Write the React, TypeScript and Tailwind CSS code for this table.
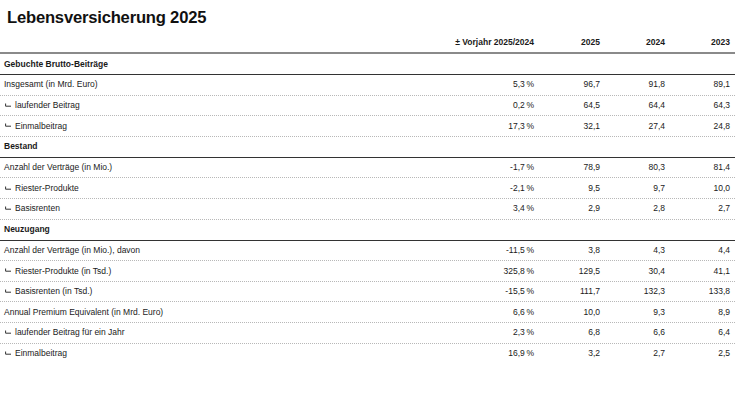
import React from "react";

type Row = { label: string; sub?: boolean; v: [string, string, string, string] };
type Section = { title: string; rows: Row[] };

const P = "\u2009%";

const sections: Section[] = [
  {
    title: "Gebuchte Brutto-Beiträge",
    rows: [
      { label: "Insgesamt (in Mrd. Euro)", v: ["5,3" + P, "96,7", "91,8", "89,1"] },
      { label: "laufender Beitrag", sub: true, v: ["0,2" + P, "64,5", "64,4", "64,3"] },
      { label: "Einmalbeitrag", sub: true, v: ["17,3" + P, "32,1", "27,4", "24,8"] },
    ],
  },
  {
    title: "Bestand",
    rows: [
      { label: "Anzahl der Verträge (in Mio.)", v: ["-1,7" + P, "78,9", "80,3", "81,4"] },
      { label: "Riester-Produkte", sub: true, v: ["-2,1" + P, "9,5", "9,7", "10,0"] },
      { label: "Basisrenten", sub: true, v: ["3,4" + P, "2,9", "2,8", "2,7"] },
    ],
  },
  {
    title: "Neuzugang",
    rows: [
      { label: "Anzahl der Verträge (in Mio.), davon", v: ["-11,5" + P, "3,8", "4,3", "4,4"] },
      { label: "Riester-Produkte (in Tsd.)", sub: true, v: ["325,8" + P, "129,5", "30,4", "41,1"] },
      { label: "Basisrenten (in Tsd.)", sub: true, v: ["-15,5" + P, "111,7", "132,3", "133,8"] },
      { label: "Annual Premium Equivalent (in Mrd. Euro)", v: ["6,6" + P, "10,0", "9,3", "8,9"] },
      { label: "laufender Beitrag für ein Jahr", sub: true, v: ["2,3" + P, "6,8", "6,6", "6,4"] },
      { label: "Einmalbeitrag", sub: true, v: ["16,9" + P, "3,2", "2,7", "2,5"] },
    ],
  },
];

function SubMark() {
  return (
    <svg width="6" height="5" viewBox="0 0 6 5" className="mr-[4px] shrink-0">
      <path d="M0.6 0.5 V3.2 H6" stroke="#333" strokeWidth="1" fill="none" />
    </svg>
  );
}

export default function App() {
  return (
    <div
      className="w-[735px] h-[413px] bg-white text-[#1a1a1a] overflow-hidden"
      style={{ fontFamily: '"Liberation Sans", Arial, sans-serif' }}
    >
      <div className="pl-[7px] pt-[6px] h-[33px] text-[16.6px] font-bold tracking-[-0.2px] leading-[24px] text-[#111]">
        Lebensversicherung 2025
      </div>
      <div className="flex items-center h-[21px] text-[8.5px] font-bold border-b-2 border-[#8a8a8a]">
        <div className="flex-1" />
        <div className="w-[134px] text-right">± Vorjahr 2025/2024</div>
        <div className="w-[66px] text-right">2025</div>
        <div className="w-[65px] text-right">2024</div>
        <div className="w-[70px] text-right pr-[5px]">2023</div>
      </div>
      {sections.map((s, si) => (
        <div key={s.title}>
          <div className="flex items-center h-[21px] pl-[4px] text-[8.5px] font-bold border-b border-[#333]">
            {s.title}
          </div>
          {s.rows.map((r, i) => {
            const last = si === sections.length - 1 && i === s.rows.length - 1;
            return (
              <div
                key={r.label + i}
                className={`flex items-center h-[20.6px] text-[8.5px] ${
                  last ? "" : "border-b border-dotted border-[#b8b8b8]"
                }`}
              >
                <div className={`flex-1 flex items-center ${r.sub ? "pl-[5px]" : "pl-[4px]"}`}>
                  {r.sub && <SubMark />}
                  <span>{r.label}</span>
                </div>
                <div className="w-[134px] text-right">{r.v[0]}</div>
                <div className="w-[66px] text-right">{r.v[1]}</div>
                <div className="w-[65px] text-right">{r.v[2]}</div>
                <div className="w-[70px] text-right pr-[5px]">{r.v[3]}</div>
              </div>
            );
          })}
        </div>
      ))}
    </div>
  );
}
